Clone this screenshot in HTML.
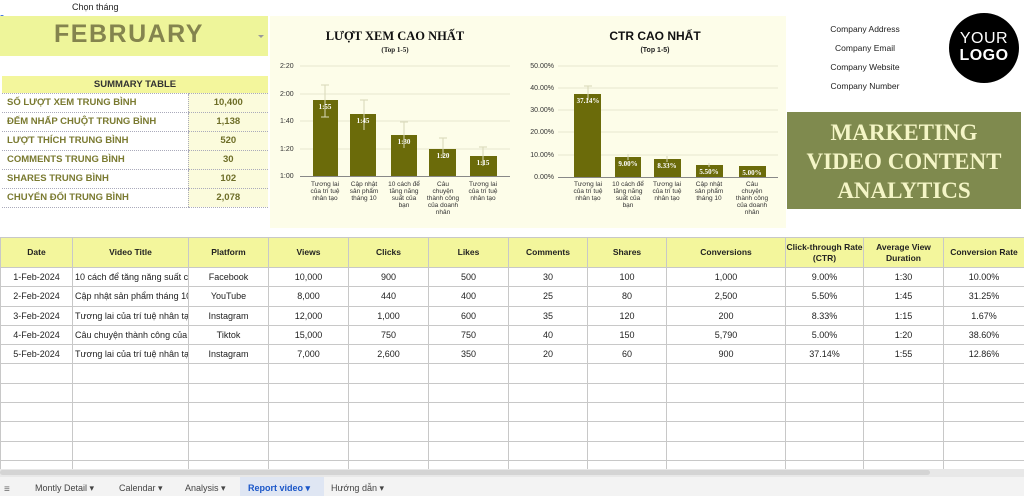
<!DOCTYPE html>
<html><head><meta charset="utf-8"><style>
*{margin:0;padding:0;box-sizing:border-box}
body{width:1024px;height:496px;overflow:hidden;background:#fff;font-family:"Liberation Sans",Arial,sans-serif;position:relative;color:#222}
.abs{position:absolute}
.sum td{height:19px;font-size:9.5px;font-weight:bold;color:#7a7a30;border-bottom:1px dotted #aab;padding-left:5px}
.sum td.v{text-align:center;padding:0;background:#fbfbdc;border-left:1px dotted #aab;color:#6e6e28}
table.g{border-collapse:collapse;position:absolute;left:0;top:237px;table-layout:fixed;width:1024px}
table.g td{border:1px solid #c8c8c8;height:19.3px;font-size:9px;text-align:center;white-space:nowrap;overflow:hidden;color:#222;text-overflow:clip}
table.g tr.h td{background:#f3f69c;height:30px;font-weight:bold;font-size:8.5px;line-height:11px}
table.g td.l{text-align:left;padding-left:2px}
</style></head><body>
<div class="abs" style="left:72px;top:2px;font-size:9px">Chọn tháng</div>
<div class="abs" style="left:0;top:15px;width:4px;height:4px;border-radius:2px;background:#3b6fe0"></div>
<div class="abs" style="left:0;top:16px;width:268px;height:40px;background:#eef59a"></div>
<div class="abs" style="left:0;top:20px;width:258px;text-align:center;font-size:25px;font-weight:bold;color:#84844e;letter-spacing:1.5px">FEBRUARY</div>
<div class="abs" style="left:258px;top:35px;width:0;height:0;border-left:3px solid transparent;border-right:3px solid transparent;border-top:3px solid #999"></div>

<table class="abs sum" style="left:2px;top:76px;width:266px;border-collapse:collapse">
<tr><td colspan="2" style="background:#f3f69c;text-align:center;color:#333;height:17px;padding:0">SUMMARY TABLE</td></tr>
<tr><td style="width:186px">SỐ LƯỢT XEM TRUNG BÌNH</td><td class="v">10,400</td></tr>
<tr><td>ĐẾM NHẤP CHUỘT TRUNG BÌNH</td><td class="v">1,138</td></tr>
<tr><td>LƯỢT THÍCH TRUNG BÌNH</td><td class="v">520</td></tr>
<tr><td>COMMENTS TRUNG BÌNH</td><td class="v">30</td></tr>
<tr><td>SHARES TRUNG BÌNH</td><td class="v">102</td></tr>
<tr><td>CHUYỂN ĐỔI TRUNG BÌNH</td><td class="v">2,078</td></tr>
</table>

<svg class="abs" style="left:270px;top:16px" width="516" height="212" viewBox="270 16 516 212">
<rect x="270" y="16" width="516" height="212" fill="#fdfde9"/>
<text x="395" y="40" font-family="Liberation Serif,serif" font-weight="bold" font-size="12.5" text-anchor="middle" fill="#111">LƯỢT XEM CAO NHẤT</text>
<text x="395" y="52" font-family="Liberation Serif,serif" font-weight="bold" font-size="7" text-anchor="middle" fill="#222">(Top 1-5)</text>
<text x="655" y="40" font-weight="bold" font-size="12" text-anchor="middle" fill="#111">CTR CAO NHẤT</text>
<text x="655" y="52" font-weight="bold" font-size="7" text-anchor="middle" fill="#222">(Top 1-5)</text>
<g stroke="#e6e6d0" stroke-width="1">
<line x1="300" x2="510" y1="66" y2="66"/><line x1="300" x2="510" y1="94" y2="94"/><line x1="300" x2="510" y1="121" y2="121"/><line x1="300" x2="510" y1="149" y2="149"/>
<line x1="558" x2="778" y1="66" y2="66"/><line x1="558" x2="778" y1="88" y2="88"/><line x1="558" x2="778" y1="110" y2="110"/><line x1="558" x2="778" y1="132" y2="132"/><line x1="558" x2="778" y1="155" y2="155"/>
</g>
<line x1="300" x2="510" y1="176.5" y2="176.5" stroke="#888"/>
<line x1="558" x2="778" y1="177.5" y2="177.5" stroke="#888"/>
<g font-size="7" fill="#333">
<text x="280" y="68">2:20</text><text x="280" y="96">2:00</text><text x="280" y="123">1:40</text><text x="280" y="151">1:20</text><text x="280" y="178">1:00</text>
<text x="554" y="68" text-anchor="end">50.00%</text><text x="554" y="90" text-anchor="end">40.00%</text><text x="554" y="112" text-anchor="end">30.00%</text><text x="554" y="134" text-anchor="end">20.00%</text><text x="554" y="157" text-anchor="end">10.00%</text><text x="554" y="179" text-anchor="end">0.00%</text>
</g>
<g fill="#6b6b0a">
<rect x="313" y="100" width="25" height="76"/><rect x="350" y="114" width="26" height="62"/><rect x="391" y="135" width="26" height="41"/><rect x="429" y="149" width="27" height="27"/><rect x="470" y="156" width="27" height="20"/>
<rect x="574" y="94" width="27" height="83"/><rect x="615" y="157" width="26" height="20"/><rect x="654" y="159" width="27" height="18"/><rect x="696" y="165" width="27" height="12"/><rect x="739" y="166" width="27" height="11"/>
</g>
<g stroke="#d8d8b8" stroke-width="1" fill="none">
<path d="M325 85V117M321 85h8M321 117h8"/><path d="M364 100V130M360 100h8"/><path d="M404 122V148M400 122h8"/><path d="M443 138V158M439 138h8"/><path d="M483 147V166M479 147h8"/>
<path d="M588 86V100M584 86h8"/><path d="M628 154V160"/><path d="M667 156V162"/><path d="M709 163V167"/>
</g>
<g font-family="Liberation Serif,serif" font-weight="bold" font-size="7" fill="#fff" text-anchor="middle">
<text x="325" y="109">1:55</text><text x="363" y="123">1:45</text><text x="404" y="144">1:30</text><text x="443" y="158">1:20</text><text x="483" y="165">1:15</text>
<text x="588" y="103">37.14%</text><text x="628" y="166">9.00%</text><text x="667" y="168">8.33%</text><text x="709" y="174">5.50%</text><text x="752" y="175">5.00%</text>
</g>
<g font-size="6.5" fill="#333" text-anchor="middle">
<text x="325" y="186">Tương lai</text><text x="325" y="193">của trí tuệ</text><text x="325" y="200">nhân tạo</text>
<text x="364" y="186">Cập nhật</text><text x="364" y="193">sản phẩm</text><text x="364" y="200">tháng 10</text>
<text x="404" y="186">10 cách để</text><text x="404" y="193">tăng năng</text><text x="404" y="200">suất của</text><text x="404" y="207">bạn</text>
<text x="443" y="186">Câu</text><text x="443" y="193">chuyện</text><text x="443" y="200">thành công</text><text x="443" y="207">của doanh</text><text x="443" y="214">nhân</text>
<text x="483" y="186">Tương lai</text><text x="483" y="193">của trí tuệ</text><text x="483" y="200">nhân tạo</text>
<text x="588" y="186">Tương lai</text><text x="588" y="193">của trí tuệ</text><text x="588" y="200">nhân tạo</text>
<text x="628" y="186">10 cách để</text><text x="628" y="193">tăng năng</text><text x="628" y="200">suất của</text><text x="628" y="207">bạn</text>
<text x="667" y="186">Tương lai</text><text x="667" y="193">của trí tuệ</text><text x="667" y="200">nhân tạo</text>
<text x="709" y="186">Cập nhật</text><text x="709" y="193">sản phẩm</text><text x="709" y="200">tháng 10</text>
<text x="752" y="186">Câu</text><text x="752" y="193">chuyện</text><text x="752" y="200">thành công</text><text x="752" y="207">của doanh</text><text x="752" y="214">nhân</text>
</g>
</svg>

<div class="abs" style="left:800px;top:20px;width:130px;text-align:center;font-size:8.5px;line-height:19px;color:#222">Company Address<br>Company Email<br>Company Website<br>Company Number</div>
<div class="abs" style="left:949px;top:13px;width:70px;height:70px;border-radius:35px;background:#000;color:#fff;text-align:center;padding-top:17px;font-size:16px;line-height:17px;letter-spacing:.5px">YOUR<br><b>LOGO</b></div>
<div class="abs" style="left:787px;top:112px;width:234px;height:97px;background:#7f8a4e;color:#f4f5c6;font-family:'Liberation Serif',serif;font-weight:bold;font-size:23px;line-height:29px;text-align:center;padding-top:6px">MARKETING<br>VIDEO CONTENT<br>ANALYTICS</div>

<table class="g">
<colgroup><col style="width:72px"><col style="width:116px"><col style="width:80px"><col style="width:80px"><col style="width:80px"><col style="width:80px"><col style="width:79px"><col style="width:79px"><col style="width:119px"><col style="width:78px"><col style="width:80px"><col style="width:81px"></colgroup>
<tr class="h"><td>Date</td><td>Video Title</td><td>Platform</td><td>Views</td><td>Clicks</td><td>Likes</td><td>Comments</td><td>Shares</td><td>Conversions</td><td>Click-through Rate<br>(CTR)</td><td>Average View<br>Duration</td><td>Conversion Rate</td></tr>
<tr><td>1-Feb-2024</td><td class="l">10 cách để tăng năng suất của</td><td>Facebook</td><td>10,000</td><td>900</td><td>500</td><td>30</td><td>100</td><td>1,000</td><td>9.00%</td><td>1:30</td><td>10.00%</td></tr>
<tr><td>2-Feb-2024</td><td class="l">Cập nhật sản phẩm tháng 10</td><td>YouTube</td><td>8,000</td><td>440</td><td>400</td><td>25</td><td>80</td><td>2,500</td><td>5.50%</td><td>1:45</td><td>31.25%</td></tr>
<tr><td>3-Feb-2024</td><td class="l">Tương lai của trí tuệ nhân tạo</td><td>Instagram</td><td>12,000</td><td>1,000</td><td>600</td><td>35</td><td>120</td><td>200</td><td>8.33%</td><td>1:15</td><td>1.67%</td></tr>
<tr><td>4-Feb-2024</td><td class="l">Câu chuyện thành công của doanh</td><td>Tiktok</td><td>15,000</td><td>750</td><td>750</td><td>40</td><td>150</td><td>5,790</td><td>5.00%</td><td>1:20</td><td>38.60%</td></tr>
<tr><td>5-Feb-2024</td><td class="l">Tương lai của trí tuệ nhân tạo</td><td>Instagram</td><td>7,000</td><td>2,600</td><td>350</td><td>20</td><td>60</td><td>900</td><td>37.14%</td><td>1:55</td><td>12.86%</td></tr>
<tr><td></td><td></td><td></td><td></td><td></td><td></td><td></td><td></td><td></td><td></td><td></td><td></td></tr>
<tr><td></td><td></td><td></td><td></td><td></td><td></td><td></td><td></td><td></td><td></td><td></td><td></td></tr>
<tr><td></td><td></td><td></td><td></td><td></td><td></td><td></td><td></td><td></td><td></td><td></td><td></td></tr>
<tr><td></td><td></td><td></td><td></td><td></td><td></td><td></td><td></td><td></td><td></td><td></td><td></td></tr>
<tr><td></td><td></td><td></td><td></td><td></td><td></td><td></td><td></td><td></td><td></td><td></td><td></td></tr>
<tr><td></td><td></td><td></td><td></td><td></td><td></td><td></td><td></td><td></td><td></td><td></td><td></td></tr>
</table>

<div class="abs" style="left:0;top:469px;width:1024px;height:8px;background:#e8e8e8"></div>
<div class="abs" style="left:0;top:470px;width:930px;height:5px;border-radius:3px;background:#d4d4d4"></div>
<div class="abs" style="left:0;top:477px;width:1024px;height:19px;background:#f3f3f3;font-size:9px;color:#444"></div>
<div class="abs" style="left:240px;top:477px;width:84px;height:19px;background:#dfe6f3"></div>
<div class="abs" style="left:4px;top:484px;font-size:10px;color:#666">≡</div>
<div class="abs" style="left:35px;top:483px;font-size:9px;color:#444;white-space:nowrap">Montly Detail ▾</div>
<div class="abs" style="left:119px;top:483px;font-size:9px;color:#444">Calendar ▾</div>
<div class="abs" style="left:185px;top:483px;font-size:9px;color:#444">Analysis ▾</div>
<div class="abs" style="left:248px;top:483px;font-size:9px;color:#1a56c8;font-weight:bold">Report video ▾</div>
<div class="abs" style="left:331px;top:483px;font-size:9px;color:#444">Hướng dẫn ▾</div>
</body></html>
